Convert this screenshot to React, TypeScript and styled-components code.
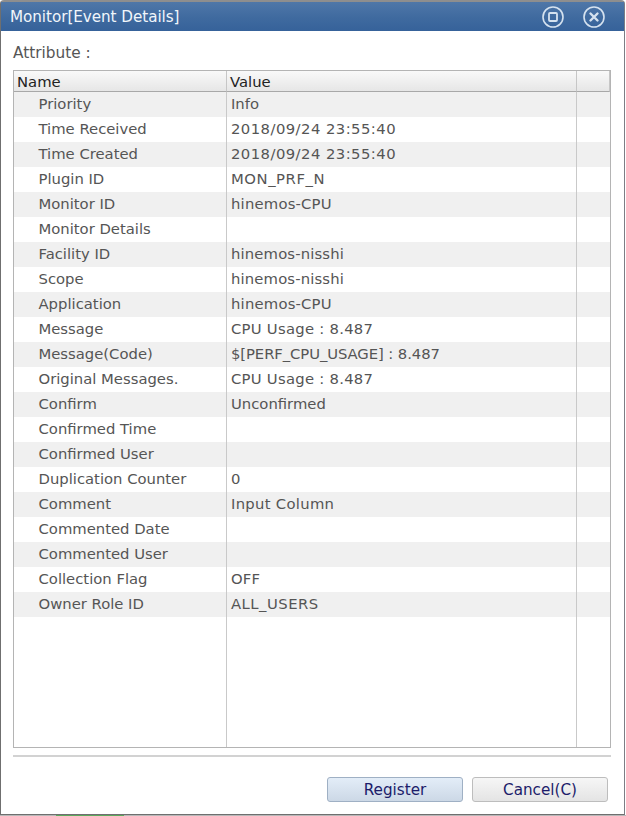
import React from "react";
import styled, { createGlobalStyle } from "styled-components";

const Global = createGlobalStyle`
  html, body { margin: 0; padding: 0; background: #fff; }
  body { width: 626px; height: 816px; overflow: hidden; font-family: "DejaVu Sans", Verdana, sans-serif; }
`;

const Dialog = styled.div`
  box-sizing: border-box;
  width: 625px;
  height: 815px;
  background: #fff;
  border-top: 2px solid #8e8e8e;
  border-left: 1px solid #6f6f6f;
  border-right: 1px solid #7d7d85;
  border-bottom: 1px solid #6f6f6f;
  border-top-right-radius: 4px;
  border-top-left-radius: 4px;
  display: flex;
  flex-direction: column;
`;

const BehindStrip = styled.div`
  height: 1px;
  background: linear-gradient(
    90deg,
    #b8b8b8 0,
    #b8b8b8 56px,
    #5da85d 56px,
    #5da85d 124px,
    #b8b8b8 124px,
    #b8b8b8 626px
  );
`;

const TitleBar = styled.div`
  height: 29px;
  flex: none;
  background: linear-gradient(180deg, #4f77a8 0%, #3f6a9f 55%, #36629a 100%);
  display: flex;
  align-items: center;
  justify-content: space-between;
  padding: 0 19px 0 9px;
`;

const Title = styled.div`
  color: #f1f6fb;
  font-size: 15.2px;
  letter-spacing: -0.05px;
`;

const TitleIcons = styled.div`
  display: flex;
  gap: 19px;
  align-items: center;
`;

const Body = styled.div`
  flex: 1;
  display: flex;
  flex-direction: column;
  padding: 13px 13px 0 12px;
  min-height: 0;
`;

const Label = styled.div`
  color: #555;
  font-size: 15.3px;
  line-height: 18px;
  height: 26px;
`;

const TableBox = styled.div`
  box-sizing: border-box;
  height: 678px;
  border: 1px solid #b4b4b4;
  display: grid;
  grid-template-columns: 213px 350px 1fr;
  grid-template-rows: 21px 1fr;
`;

const HeadCell = styled.div`
  background: linear-gradient(180deg, #f9f9f9 0%, #e6e6e6 100%);
  border-bottom: 1px solid #a8a8a8;
  border-right: 1px solid #c6c6c6;
  color: #222;
  font-size: 14.8px;
  line-height: 21px;
  padding-left: 3px;
  box-sizing: border-box;
  &:last-child { border-right: none; }
`;

const RowsArea = styled.div`
  grid-column: 1 / 4;
  display: flex;
  flex-direction: column;
  background: linear-gradient(
    90deg,
    transparent 212px,
    #c9c9c9 212px,
    #c9c9c9 213px,
    transparent 213px,
    transparent 562px,
    #c9c9c9 562px,
    #c9c9c9 563px,
    transparent 563px
  );
`;

const Row = styled.div<{ $odd: boolean }>`
  height: 25px;
  flex: none;
  display: grid;
  grid-template-columns: 213px 350px 1fr;
  background: ${(p) =>
    p.$odd
      ? `linear-gradient(90deg, #f0f0f0 212px, #c9c9c9 212px, #c9c9c9 213px, #f0f0f0 213px, #f0f0f0 562px, #c9c9c9 562px, #c9c9c9 563px, #f0f0f0 563px)`
      : "transparent"};
`;

const NameCell = styled.div`
  color: #555;
  font-size: 14.8px;
  line-height: 23px;
  padding-left: 24.5px;
  white-space: nowrap;
`;

const ValueCell = styled.div<{ $tracking: number }>`
  color: #555;
  font-size: 14.8px;
  line-height: 23px;
  padding-left: 4px;
  white-space: nowrap;
  letter-spacing: ${(p) => p.$tracking}px;
`;

const Divider = styled.div`
  height: 2px;
  background: #d2d2d2;
  margin-top: 7px;
  flex: none;
`;

const Footer = styled.div`
  display: flex;
  justify-content: flex-end;
  gap: 9px;
  padding: 20px 3px 0 0;
`;

const Button = styled.button<{ $primary?: boolean }>`
  box-sizing: border-box;
  width: 136px;
  height: 25px;
  border-radius: 3px;
  border: 1px solid ${(p) => (p.$primary ? "#9fb0c4" : "#bdbdbd")};
  background: ${(p) =>
    p.$primary
      ? "linear-gradient(180deg, #e3edf8 0%, #ccd8e6 100%)"
      : "linear-gradient(180deg, #f6f6f6 0%, #e4e4e4 100%)"};
  color: #1c1c6a;
  font-family: "DejaVu Sans", Verdana, sans-serif;
  font-size: 15.2px;
  padding: 1px 0 0;
`;

const rows: [string, string, number][] = [
  ["Priority", "Info", 0],
  ["Time Received", "2018/09/24 23:55:40", 0.45],
  ["Time Created", "2018/09/24 23:55:40", 0.45],
  ["Plugin ID", "MON_PRF_N", 0.55],
  ["Monitor ID", "hinemos-CPU", 0.2],
  ["Monitor Details", "", 0],
  ["Facility ID", "hinemos-nisshi", 0.15],
  ["Scope", "hinemos-nisshi", 0.15],
  ["Application", "hinemos-CPU", 0.2],
  ["Message", "CPU Usage : 8.487", 0.27],
  ["Message(Code)", "$[PERF_CPU_USAGE] : 8.487", -0.08],
  ["Original Messages.", "CPU Usage : 8.487", 0.27],
  ["Confirm", "Unconfirmed", 0],
  ["Confirmed Time", "", 0],
  ["Confirmed User", "", 0],
  ["Duplication Counter", "0", 0],
  ["Comment", "Input Column", 0.3],
  ["Commented Date", "", 0],
  ["Commented User", "", 0],
  ["Collection Flag", "OFF", 0.2],
  ["Owner Role ID", "ALL_USERS", 0.5],
];

export default function App() {
  return (
    <>
      <Global />
      <Dialog>
        <TitleBar>
          <Title>Monitor[Event Details]</Title>
          <TitleIcons>
            <svg width="22" height="22" viewBox="0 0 22 22" fill="none" stroke="#d5e2ef">
              <circle cx="11" cy="11" r="10" strokeWidth="1.6" />
              <rect x="7" y="7" width="8" height="8" rx="1" strokeWidth="1.8" />
            </svg>
            <svg width="22" height="22" viewBox="0 0 22 22" fill="none" stroke="#d5e2ef">
              <circle cx="11" cy="11" r="10" strokeWidth="1.6" />
              <path d="M7.5 7.5 L14.5 14.5 M14.5 7.5 L7.5 14.5" strokeWidth="2.4" strokeLinecap="round" />
            </svg>
          </TitleIcons>
        </TitleBar>
        <Body>
          <Label>Attribute :</Label>
          <TableBox>
            <HeadCell>Name</HeadCell>
            <HeadCell>Value</HeadCell>
            <HeadCell />
            <RowsArea>
              {rows.map(([n, v, t], i) => (
                <Row key={n} $odd={i % 2 === 0}>
                  <NameCell>{n}</NameCell>
                  <ValueCell $tracking={t}>{v}</ValueCell>
                </Row>
              ))}
            </RowsArea>
          </TableBox>
          <Divider />
          <Footer>
            <Button $primary>Register</Button>
            <Button>Cancel(C)</Button>
          </Footer>
        </Body>
      </Dialog>
      <BehindStrip />
    </>
  );
}
